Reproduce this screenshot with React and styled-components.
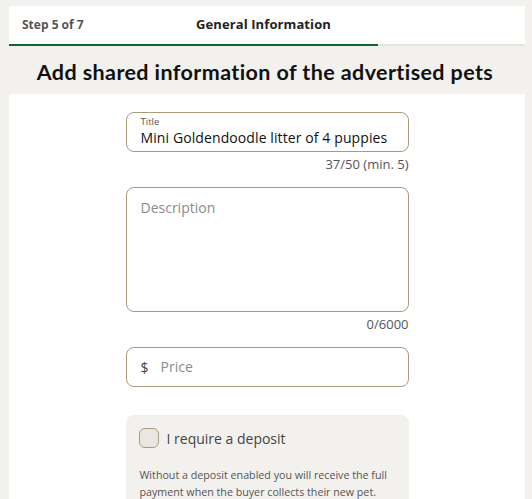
import React from "react";
import styled, { createGlobalStyle } from "styled-components";

const Global = createGlobalStyle`
  html, body { margin: 0; padding: 0; background: #f3f1ed; }
  body { font-family: "Open Sans", "Noto Sans", sans-serif; color: #222; }
  * { box-sizing: border-box; }
`;

const Page = styled.div`
  padding: 6px 7px 0 9px;
  width: 532px;
  height: 499px;
  overflow: hidden;
`;

const Header = styled.div`
  position: relative;
  display: flex;
  align-items: center;
  height: 40px;
  background: #fff;
  border-bottom: 2px solid #e6e3dd;
  padding-left: 13px;
`;

const Progress = styled.div`
  position: absolute;
  left: 0;
  bottom: -2px;
  height: 2px;
  background: #0e6536;
`;

const StepLabel = styled.div`
  flex: 0 0 174px;
  font-size: 12px;
  font-weight: 700;
  color: #555;
  padding-bottom: 2px;
`;

const StepTitle = styled.div`
  font-size: 13px;
  font-weight: 700;
  color: #222;
  letter-spacing: 0.1px;
  padding-bottom: 2px;
`;

const Heading = styled.h1`
  margin: 0;
  height: 48px;
  display: flex;
  align-items: center;
  justify-content: center;
  font-family: "Lato", sans-serif;
  font-weight: 700;
  font-size: 21.5px;
  letter-spacing: 0.4px;
  color: #111;
  padding-top: 4px;
  padding-right: 4px;
`;

const Card = styled.div`
  background: #fff;
  height: 405px;
  display: flex;
  justify-content: center;
  padding-top: 18px;
`;

const Form = styled.div`
  width: 283px;
  display: flex;
  flex-direction: column;
  & > * { flex-shrink: 0; }
`;

const Box = styled.div`
  border: 1px solid #a99c7b;
  border-radius: 8px;
  background: #fff;
  height: ${(p) => p.$h}px;
  padding: ${(p) => p.$pad};
  display: flex;
  flex-direction: ${(p) => (p.$col ? "column" : "row")};
  align-items: ${(p) => (p.$col ? "stretch" : "center")};
`;

const SmallLabel = styled.div`
  font-size: 9.5px;
  color: #555;
  line-height: 12px;
`;

const Value = styled.div`
  font-size: 14px;
  color: #111;
  line-height: 19px;
  letter-spacing: 0.1px;
`;

const Placeholder = styled.div`
  font-size: 14px;
  color: #8b8b8b;
  line-height: 18px;
`;

const Currency = styled.span`
  font-size: 14px;
  color: #444;
  margin-right: 12px;
`;

const Counter = styled.div`
  text-align: right;
  font-size: 13px;
  color: #555;
  line-height: 18px;
  margin-top: ${(p) => p.$mt}px;
  margin-bottom: ${(p) => p.$mb}px;
`;

const Deposit = styled.div`
  margin-top: 28px;
  background: #f3f1ed;
  border-radius: 8px;
  padding: 13px 13px 20px 13px;
  height: 110px;
`;

const CheckRow = styled.label`
  display: flex;
  align-items: center;
  gap: 8px;
  font-size: 14px;
  color: #444;
`;

const Checkbox = styled.span`
  width: 20px;
  height: 20px;
  border: 1px solid #a99c7b;
  border-radius: 6px;
  background: #ebe7e0;
  flex: none;
`;

const Note = styled.p`
  margin: 19px 0 0 1px;
  font-size: 10.7px;
  line-height: 17px;
  color: #555;
`;

export default function App() {
  const step = 5;
  const total = 7;
  return (
    <>
      <Global />
      <Page>
        <Header>
          <StepLabel>Step {step} of {total}</StepLabel>
          <StepTitle>General Information</StepTitle>
          <Progress style={{ width: `${(step / total) * 100}%` }} />
        </Header>
        <Heading>Add shared information of the advertised pets</Heading>
        <Card>
          <Form>
            <Box $h={40} $pad="3px 14px 0" $col>
              <SmallLabel>Title</SmallLabel>
              <Value>Mini Goldendoodle litter of 4 puppies</Value>
            </Box>
            <Counter $mt={3} $mb={14}>37/50 (min. 5)</Counter>
            <Box $h={125} $pad="11px 14px" $col>
              <Placeholder>Description</Placeholder>
            </Box>
            <Counter $mt={3} $mb={14}>0/6000</Counter>
            <Box $h={40} $pad="0 14px">
              <Currency>$</Currency>
              <Placeholder>Price</Placeholder>
            </Box>
            <Deposit>
              <CheckRow>
                <Checkbox />
                I require a deposit
              </CheckRow>
              <Note>
                Without a deposit enabled you will receive the full payment when the buyer collects their new pet.
              </Note>
            </Deposit>
          </Form>
        </Card>
      </Page>
    </>
  );
}
